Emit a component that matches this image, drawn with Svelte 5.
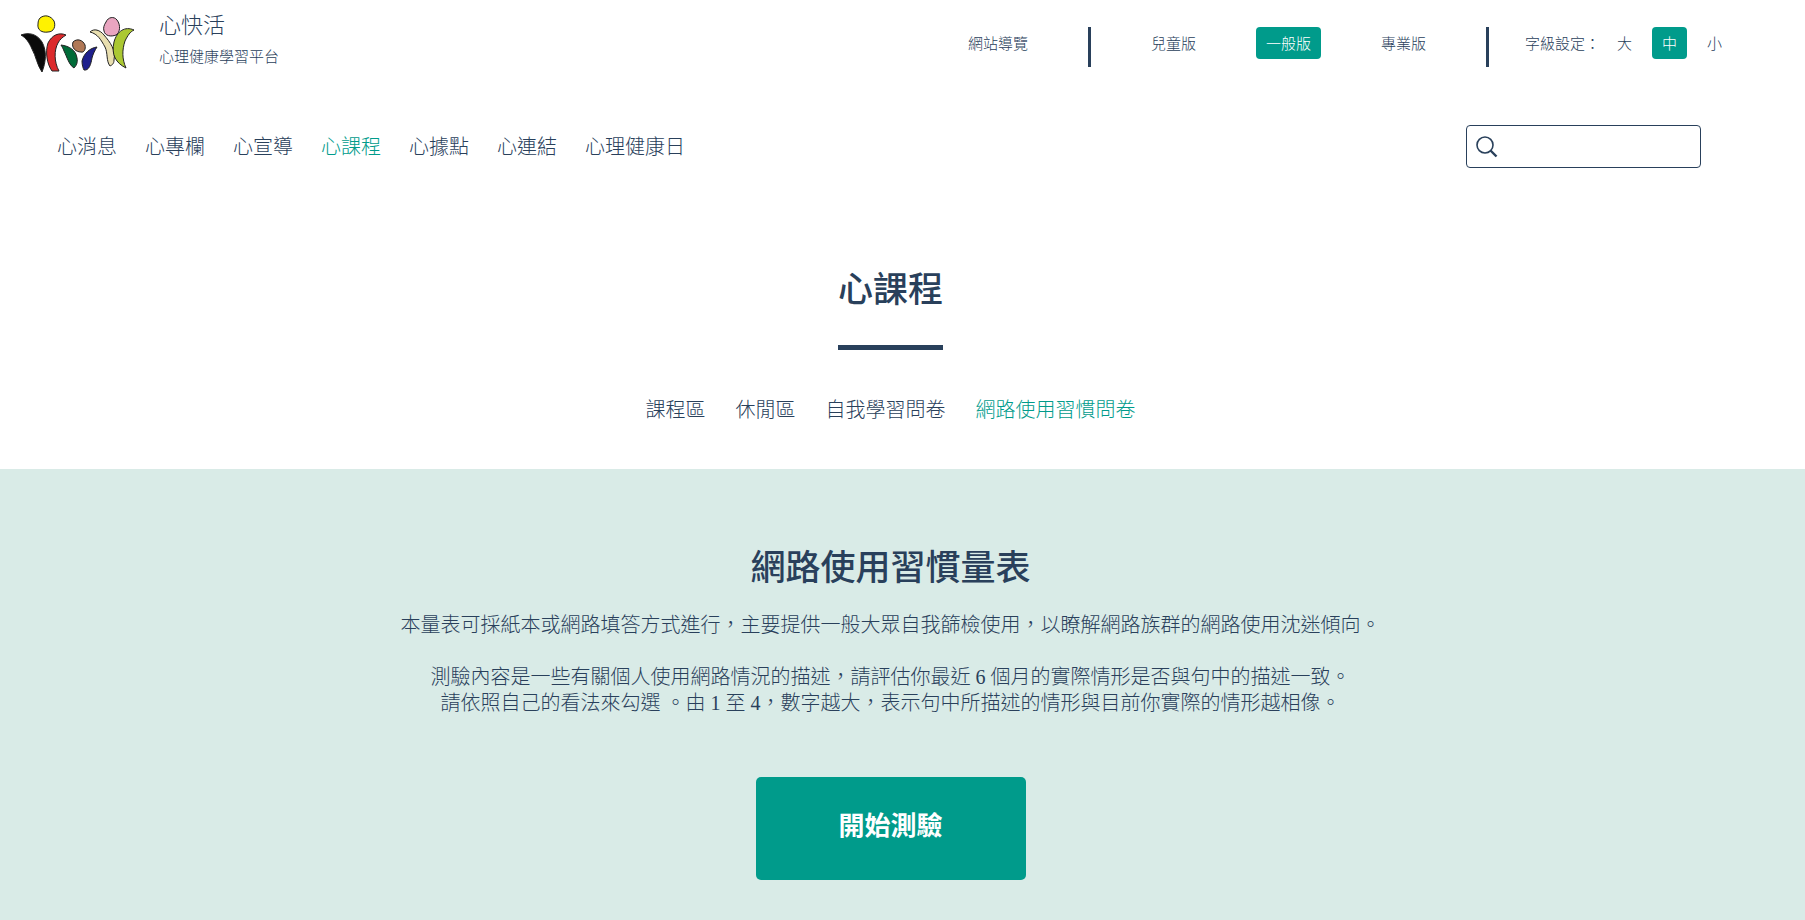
<script>
	let version = '一般版';
	let fontSize = '中';
	let keyword = '';

	const versions = ['兒童版', '一般版', '專業版'];
	const sizes = ['大', '中', '小'];
	const menu = ['心消息', '心專欄', '心宣導', '心課程', '心據點', '心連結', '心理健康日'];
	const tabs = ['課程區', '休閒區', '自我學習問卷', '網路使用習慣問卷'];
</script>

<div class="page" lang="zh-Hant">
	<header>
		<div class="top">
			<a class="brand" href="#home">
				<svg width="116" height="60" viewBox="0 0 116 60" stroke="#222" stroke-width="1" stroke-linejoin="round" aria-hidden="true">
					<path fill="#fff200" d="M20 4C25 0 31 2 34 7C36 12 34 18 28 18C22 19 17 16 18 10C18 7 19 5 20 4Z" />
					<path fill="#0a0a0a" d="M1 21C9 18 17 20 22 28C27 37 26 48 22 58C17 51 16 42 12 35C9 28 6 24 1 21Z" />
					<path fill="#dc2a2c" d="M46 21C39 18 32 21 28 29C25 38 27 50 32 57L39 57C34 48 34 36 38 29C40 25 43 23 46 21Z" />
					<path fill="#b07856" d="M53 28C57 24 63 26 65 31C66 35 64 39 61 38C56 38 51 34 53 28Z" />
					<path fill="#006b38" d="M41 31C49 32 56 36 57 44C58 49 56 52 54 54C49 51 47 43 44 37C43 34 42 33 41 31Z" />
					<path fill="#1e1f8c" d="M77 33C70 34 64 39 62 47C62 51 63 54 64 56C69 57 71 50 72 44C73 40 75 36 77 33Z" />
					<path fill="#e9a5c0" d="M86 8C88 3 94 2 97 6C101 11 100 19 96 21C91 23 85 22 84 17C83 14 84 11 86 8Z" />
					<path fill="#e9dfb0" d="M70 18C74 14 80 16 84 21C90 28 96 36 94 46C94 50 92 51 90 52C86 47 88 39 85 33C81 26 78 20 70 18Z" />
					<path fill="#abc832" d="M114 16C105 12 97 17 94 28C91 41 96 49 106 54C102 45 102 36 105 27C108 21 110 18 114 16Z" />
				</svg>
				<span class="names">
					<span class="name">心快活</span>
					<span class="slogan">心理健康學習平台</span>
				</span>
			</a>

			<div class="tools">
				<a class="item" href="#sitemap">網站導覽</a>
				<i class="line"></i>
				{#each versions as v}
					<button class="item" class:on={version === v} on:click={() => (version = v)}>{v}</button>
				{/each}
				<i class="line"></i>
				<div class="sizes">
					<span class="label">字級設定：</span>
					{#each sizes as s}
						<button class="item" class:on={fontSize === s} on:click={() => (fontSize = s)}>{s}</button>
					{/each}
				</div>
			</div>
		</div>

		<div class="bar">
			<nav class="menu">
				{#each menu as m}
					<a href="#{m}" class:current={m === '心課程'}>{m}</a>
				{/each}
			</nav>
			<label class="search">
				<svg width="22" height="22" viewBox="0 0 22 22" fill="none" stroke="#29405b" aria-hidden="true">
					<circle cx="9" cy="9" r="8" stroke-width="1.6" />
					<path d="M14.5 14.5L20.5 20.5" stroke-width="2.4" />
				</svg>
				<input type="text" bind:value={keyword} aria-label="搜尋" />
			</label>
		</div>
	</header>

	<section class="course">
		<h1>心課程</h1>
		<nav class="tabs">
			{#each tabs as t}
				<a href="#{t}" class:current={t === '網路使用習慣問卷'}>{t}</a>
			{/each}
		</nav>
	</section>

	<section class="intro">
		<h2>網路使用習慣量表</h2>
		<p>本量表可採紙本或網路填答方式進行，主要提供一般大眾自我篩檢使用，以瞭解網路族群的網路使用沈迷傾向。</p>
		<p>
			測驗內容是一些有關個人使用網路情況的描述，請評估你最近 6 個月的實際情形是否與句中的描述一致。<br />
			請依照自己的看法來勾選 。由 1 至 4，數字越大，表示句中所描述的情形與目前你實際的情形越相像。
		</p>
		<button class="start">開始測驗</button>
	</section>
</div>

<style>
	:global(body) {
		margin: 0;
	}

	.page {
		min-height: 100vh;
		display: flex;
		flex-direction: column;
		background: #fff;
		color: #29405b;
		font-family: 'Noto Sans CJK TC', sans-serif;
		font-weight: 300;
		font-size: 20px;
		line-height: 26px;
	}

	a {
		color: inherit;
		text-decoration: none;
	}

	button {
		border: none;
		background: none;
		color: inherit;
		font: inherit;
		cursor: pointer;
	}

	.top {
		display: flex;
		justify-content: space-between;
		align-items: flex-start;
		padding: 8px 73px 0 20px;
	}

	.brand {
		display: flex;
		gap: 23px;
	}

	.brand svg {
		margin-top: 6px;
	}

	.names {
		display: flex;
		flex-direction: column;
		gap: 6px;
	}

	.name {
		font-size: 22px;
		line-height: 30px;
	}

	.slogan {
		font-size: 15px;
		line-height: 24px;
	}

	.tools {
		display: flex;
		align-items: flex-start;
		gap: 50px;
		padding-top: 19px;
		font-size: 15px;
		line-height: 32px;
	}

	.item {
		padding: 0 10px;
		border-radius: 4px;
	}

	.item.on {
		background: #009b8b;
		color: #fff;
	}

	.line {
		width: 3px;
		height: 40px;
		background: #29405b;
	}

	.sizes {
		display: flex;
		gap: 10px;
		margin-left: -14px;
	}

	.label {
		margin-right: -3px;
	}

	.bar {
		display: flex;
		justify-content: space-between;
		align-items: center;
		padding: 51px 104px 0 57px;
	}

	.menu,
	.tabs {
		display: flex;
		gap: 28px;
	}

	.menu {
		padding-bottom: 2px;
	}

	.current {
		color: #009b8b;
	}

	.search {
		display: flex;
		align-items: center;
		gap: 8px;
		box-sizing: border-box;
		width: 235px;
		height: 43px;
		padding: 0 9px;
		border: 1px solid #29405b;
		border-radius: 4px;
	}

	.search input {
		flex: 1;
		min-width: 0;
		border: none;
		outline: none;
		background: none;
		color: inherit;
		font: inherit;
	}

	.course {
		display: flex;
		flex-direction: column;
		align-items: center;
		padding: 91px 24px 47px 0;
	}

	h1,
	h2 {
		margin: 0;
		font-size: 35px;
		font-weight: 500;
		line-height: 56px;
	}

	h1 {
		padding-bottom: 30px;
		border-bottom: 5px solid #29405b;
	}

	.tabs {
		gap: 30px;
		margin-top: 46px;
	}

	.intro {
		flex: 1;
		display: flex;
		flex-direction: column;
		align-items: center;
		padding: 68px 24px 38px 0;
		background: #d9ebe7;
		text-align: center;
	}

	p {
		margin: 0 0 26px;
		/* serif digits between the Chinese characters */
		font-family: 'Liberation Serif', 'Noto Sans CJK TC', serif;
	}

	h2 {
		margin-bottom: 19px;
	}

	.start {
		width: 270px;
		height: 103px;
		margin-top: 35px;
		padding: 0 0 10px;
		border-radius: 5px;
		background: #009b8b;
		color: #fff;
		font-size: 26px;
		font-weight: 700;
	}
</style>
